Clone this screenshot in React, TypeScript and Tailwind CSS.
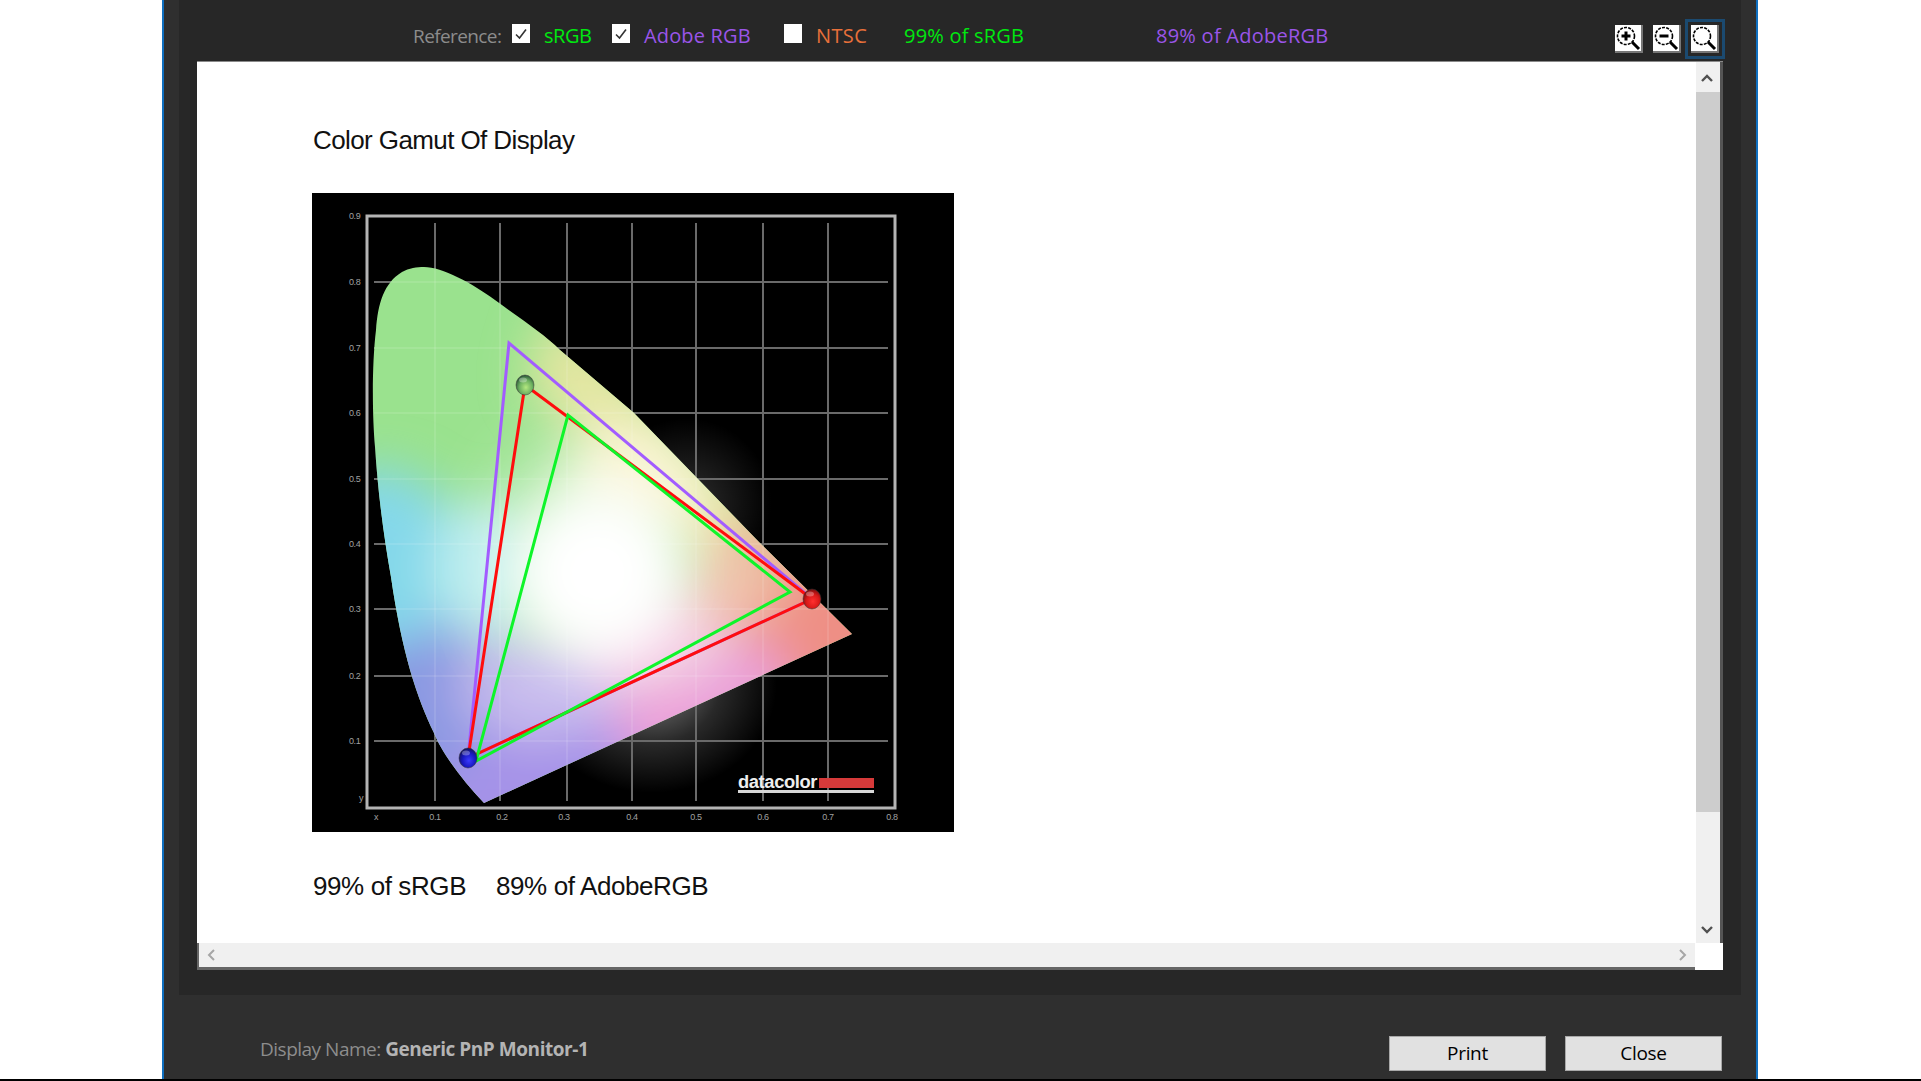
import type { ReactNode } from "react";

const gridX = [123, 188, 255, 320, 384, 451, 516];
const gridY = [89, 155, 220, 286, 351, 416, 483, 548];
const yLabels = [
  ["0.9", 23],
  ["0.8", 89],
  ["0.7", 155],
  ["0.6", 220],
  ["0.5", 286],
  ["0.4", 351],
  ["0.3", 416],
  ["0.2", 483],
  ["0.1", 548],
] as const;
const xLabels = [
  ["0.1", 123],
  ["0.2", 190],
  ["0.3", 252],
  ["0.4", 320],
  ["0.5", 384],
  ["0.6", 451],
  ["0.7", 516],
  ["0.8", 580],
] as const;

const gamutPath =
  "M112 74 C130 74 160 90 183 107 C210 127 232 141 248 157 L322 220 L445 347 L540 441 L172 610 C150 587 130 560 122 540 C105 505 90 460 79 384 C72 345 66 300 63 254 C60 220 60 170 64 137 C66 110 72 90 90 79 C97 75 105 74 112 74 Z";

function Ball({ id, x, y, light, mid, dark }: { id: string; x: number; y: number; light: string; mid: string; dark: string }) {
  return (
    <>
      <radialGradient id={id} cx="0.55" cy="0.62" r="0.6">
        <stop offset="0" stopColor={light} />
        <stop offset="0.6" stopColor={mid} />
        <stop offset="1" stopColor={dark} />
      </radialGradient>
      <ellipse cx={x} cy={y} rx="9" ry="10" fill={"url(#" + id + ")"} stroke="#333" strokeOpacity="0.5" />
      <ellipse cx={x - 2} cy={y - 5} rx="4" ry="2.5" fill="#fff" fillOpacity="0.3" />
    </>
  );
}

function GamutChart() {
  return (
    <svg width="642" height="639" viewBox="0 0 642 639" className="block">
      <defs>
        <clipPath id="gamut">
          <path d={gamutPath} />
        </clipPath>
        <filter id="blur-wide" x="-60%" y="-60%" width="220%" height="220%">
          <feGaussianBlur stdDeviation="36" />
        </filter>
        <filter id="blur-mid" x="-60%" y="-60%" width="220%" height="220%">
          <feGaussianBlur stdDeviation="24" />
        </filter>
        <radialGradient id="glow-low" cx="0.5" cy="0.5" r="0.5">
          <stop offset="0" stopColor="#fff" stopOpacity="0.5" />
          <stop offset="0.55" stopColor="#fff" stopOpacity="0.16" />
          <stop offset="1" stopColor="#fff" stopOpacity="0" />
        </radialGradient>
        <radialGradient id="glow-high" cx="0.5" cy="0.5" r="0.5">
          <stop offset="0" stopColor="#fff" stopOpacity="0.18" />
          <stop offset="1" stopColor="#fff" stopOpacity="0" />
        </radialGradient>
      </defs>
      <rect width="642" height="639" fill="#000" />
      <ellipse cx="340" cy="490" rx="125" ry="110" fill="url(#glow-low)" />
      <circle cx="375" cy="310" r="85" fill="url(#glow-high)" />
      <g stroke="#6a6a6a" strokeWidth="2">
        {gridX.map((x) => (
          <line key={x} x1={x} x2={x} y1="30" y2="608" />
        ))}
        {gridY.map((y) => (
          <line key={y} x1="62" x2="576" y1={y} y2={y} />
        ))}
      </g>
      <rect x="55" y="23" width="528" height="592" fill="none" stroke="#b4b4b4" strokeWidth="3" />
      <g fill="#a0a0a0" fontSize="9" fontFamily="'Liberation Sans', Arial, sans-serif">
        {yLabels.map(([t, y]) => (
          <text key={t} x="37" y={y + 3}>
            {t}
          </text>
        ))}
        {xLabels.map(([t, x]) => (
          <text key={t} x={x} y="627" textAnchor="middle">
            {t}
          </text>
        ))}
        <text x="64" y="627" textAnchor="middle">x</text>
        <text x="49" y="608" textAnchor="middle">y</text>
      </g>
      <g clipPath="url(#gamut)">
        <rect width="642" height="639" fill="#9ae28e" />
        <g filter="url(#blur-mid)">
          <path d="M240 110 L520 380 L420 400 L300 280 L215 190 Z" fill="#e8e6a2" />
          <ellipse cx="470" cy="365" rx="70" ry="55" fill="#e8b898" />
          <ellipse cx="530" cy="445" rx="115" ry="75" fill="#ee8f85" />
          <ellipse cx="350" cy="535" rx="140" ry="70" fill="#ea9fd8" transform="rotate(-25 350 535)" />
          <ellipse cx="200" cy="590" rx="130" ry="85" fill="#a592e8" />
          <ellipse cx="105" cy="500" rx="80" ry="85" fill="#8a98e2" />
          <ellipse cx="65" cy="365" rx="85" ry="90" fill="#84d8ea" />
          <ellipse cx="330" cy="285" rx="70" ry="55" fill="#f4efc0" />
          <ellipse cx="225" cy="495" rx="80" ry="55" fill="#c4b8ec" />
          <ellipse cx="345" cy="445" rx="75" ry="50" fill="#f2c8e0" />
          <ellipse cx="420" cy="395" rx="50" ry="40" fill="#eec0a8" />
          <ellipse cx="170" cy="375" rx="50" ry="70" fill="#b8ecec" />
        </g>
        <ellipse cx="285" cy="365" rx="100" ry="120" fill="#fff" fillOpacity="0.6" filter="url(#blur-wide)" />
        <ellipse cx="285" cy="380" rx="80" ry="78" fill="#fff" filter="url(#blur-mid)" />
        <g stroke="#fff" strokeOpacity="0.1" strokeWidth="2">
          {gridX.map((x) => (
            <line key={x} x1={x} x2={x} y1="30" y2="608" />
          ))}
          {gridY.map((y) => (
            <line key={y} x1="62" x2="576" y1={y} y2={y} />
          ))}
        </g>
      </g>
      <g fill="none" strokeWidth="3" strokeLinejoin="miter">
        <path d="M197 150 L156 565 L500 406 Z" stroke="#a25cff" />
        <path d="M213 192 L156 565 L500 406 Z" stroke="#ff0d0d" />
        <path d="M256 222 L164 568 L478 399 Z" stroke="#0ef52a" />
      </g>
      <Ball id="ball-g" x={213} y={192} light="#b4e880" mid="#6cb060" dark="#2d5a3a" />
      <Ball id="ball-r" x={500} y={406} light="#ff3030" mid="#d81818" dark="#7a1010" />
      <Ball id="ball-b" x={156} y={565} light="#3a3aff" mid="#1818c0" dark="#141460" />
      <text x="426" y="595" fill="#eee" fontSize="18" fontWeight="700" fontFamily="'Liberation Sans', Arial, sans-serif" textLength="79" lengthAdjust="spacingAndGlyphs">
        datacolor
      </text>
      <rect x="507" y="585" width="55" height="10" fill="#d63a3a" />
      <rect x="426" y="597" width="136" height="3" fill="#d8d8d8" />
    </svg>
  );
}

function CheckBox({ checked }: { checked?: boolean }) {
  return (
    <span className="mt-[1px] flex h-[19px] w-[18px] items-center justify-center bg-white">
      {checked && (
        <svg width="14" height="14" viewBox="0 0 14 14" fill="none" stroke="#333" strokeWidth="1.6">
          <path d="M2 7.5 L5.5 11 L12 2.5" />
        </svg>
      )}
    </span>
  );
}

function Item({ className, children }: { className: string; children: ReactNode }) {
  return <span className={"block whitespace-nowrap leading-[26px] " + className}>{children}</span>;
}

function ZoomButton({ kind, active }: { kind: "in" | "out" | "fit"; active?: boolean }) {
  return (
    <button
      type="button"
      className={
        "flex h-[28px] w-[28px] items-center justify-center bg-white border-b-2 border-r-2 border-[#777] " +
        (active ? "outline-[3px] outline-offset-[3px] outline-[#1b4a70]" : "")
      }
    >
      <svg width="26" height="26" viewBox="0 0 26 26" fill="none" stroke="#000">
        <circle cx="11" cy="11" r="8.5" strokeWidth="1.6" strokeDasharray="3 1.2" />
        <path d="M17 17 L24 24" strokeWidth="3" />
        {kind !== "fit" && <path d="M6.5 11 H15.5" strokeWidth="3" />}
        {kind === "in" && <path d="M11 6.5 V15.5" strokeWidth="3" />}
      </svg>
    </button>
  );
}

function Chevron({ dir, color, stroke }: { dir: "up" | "down" | "left" | "right"; color: string; stroke: number }) {
  const d = {
    up: "M2 9 L7 4 L12 9",
    down: "M2 5 L7 10 L12 5",
    left: "M9 2 L4 7 L9 12",
    right: "M5 2 L10 7 L5 12",
  }[dir];
  return (
    <svg width="14" height="14" viewBox="0 0 14 14" fill="none" stroke={color} strokeWidth={stroke}>
      <path d={d} />
    </svg>
  );
}

function FooterButton({ children }: { children: ReactNode }) {
  return (
    <button
      type="button"
      className="h-[35px] w-[157px] border border-[#a8a8a8] bg-[#e1e1e1] text-[19px] leading-none text-black tracking-[-0.3px]"
    >
      {children}
    </button>
  );
}

export default function App() {
  return (
    <div className="flex h-[1081px] w-[1921px] flex-col overflow-hidden bg-white font-['Open_Sans',sans-serif]">
      <div className="ml-[162px] flex h-[1079px] w-[1596px] flex-col border-x-2 border-[#0f6fc0] bg-[#2f2f2f]">
        <div className="mx-[15px] flex h-[995px] flex-col bg-[#272727] pl-[18px] pr-[18px]">
          <div className="flex h-[62px] shrink-0 items-start border-b border-[#8a8a8a] pr-[4px] text-[20px]">
            <div className="mt-[23px] flex items-start">
              <Item className="ml-[216px] w-[99px] text-[19px] text-[#8c8c8c] tracking-[-0.6px]">Reference:</Item>
              <CheckBox checked />
              <Item className="ml-[14px] w-[68px] text-[#00e810] tracking-[-0.5px]">sRGB</Item>
              <CheckBox checked />
              <Item className="ml-[14px] w-[140px] text-[#9a55e8] tracking-[0.15px]">Adobe RGB</Item>
              <CheckBox />
              <Item className="ml-[14px] w-[88px] text-[#e8703a] tracking-[0.4px]">NTSC</Item>
              <Item className="w-[252px] text-[#00e810] tracking-[0.2px]">99% of sRGB</Item>
              <Item className="text-[#9a55e8] tracking-[0.25px]">89% of AdobeRGB</Item>
            </div>
            <div className="ml-auto mt-[25px] flex gap-[10px]">
              <ZoomButton kind="in" />
              <ZoomButton kind="out" />
              <ZoomButton kind="fit" active />
            </div>
          </div>

          <div className="flex h-[908px] flex-col bg-white">
            <div className="flex h-[881px]">
              <div className="flex-1 pl-[116px] pt-[63px] font-['Liberation_Sans',Arial,sans-serif] text-[26px] leading-[30px] text-[#111] tracking-[-0.4px]">
                <h1 className="tracking-[-0.6px]">Color Gamut Of Display</h1>
                <div className="-ml-[1px] mt-[38px]">
                  <GamutChart />
                </div>
                <p className="mt-[39px] flex">
                  <span className="w-[183px]">99% of sRGB</span>
                  <span>89% of AdobeRGB</span>
                </p>
              </div>
              <div className="flex w-[27px] flex-col border-r-[3px] border-[#555] bg-[#f0f0f0]">
                <div className="flex h-[30px] items-center justify-center pr-[3px] pt-[4px]">
                  <Chevron dir="up" color="#505050" stroke={2.4} />
                </div>
                <div className="h-[720px] bg-[#cdcdcd]" />
                <div className="flex flex-1 items-end justify-center pb-[7px] pr-[3px]">
                  <Chevron dir="down" color="#505050" stroke={2.4} />
                </div>
              </div>
            </div>
            <div className="flex h-[27px]">
              <div className="flex flex-1 items-center justify-between border-b-[3px] border-l-2 border-[#666] bg-[#f0f0f0] px-[6px]">
                <Chevron dir="left" color="#a6a6a6" stroke={2} />
                <Chevron dir="right" color="#a6a6a6" stroke={2} />
              </div>
              <div className="w-[28px] bg-white" />
            </div>
          </div>
        </div>

        <div className="flex flex-1 items-start pl-[96px] pr-[34px]">
          <p className="mt-[41px] whitespace-nowrap text-[19px] leading-[26px] text-[#8d8d8d] tracking-[-0.5px]">
            Display Name: <b className="font-bold text-[#b4b4b4] tracking-[-0.45px]">Generic PnP Monitor-1</b>
          </p>
          <div className="ml-auto mt-[41px] flex gap-[19px]">
            <FooterButton>Print</FooterButton>
            <FooterButton>Close</FooterButton>
          </div>
        </div>
      </div>
      <div className="h-[2px] bg-black" />
    </div>
  );
}
